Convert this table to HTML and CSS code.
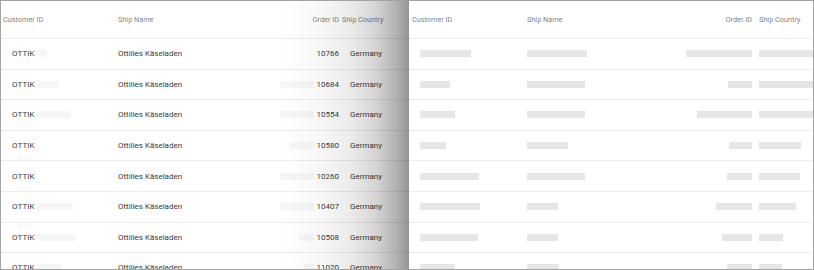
FILE: index.html
```html
<!DOCTYPE html>
<html>
<head>
<meta charset="utf-8">
<link rel="stylesheet" href="styles.css">
</head>
<body>
<div class="frame">
  <div class="panel panel-data">
    <div class="row head">
      <div class="c1 hc">Customer ID</div>
      <div class="c2 hc">Ship Name</div>
      <div class="c3 hc">Order ID</div>
      <div class="c4 hc">Ship Country</div>
    </div>
    <div class="row"><div class="c1 dc"><span class="txt">OTTIK</span><span class="ghost" style="width:10px"></span></div><div class="c2 dc">Ottilies Käseladen</div><div class="c3 dc"><span class="num">10766</span></div><div class="c4 dc">Germany</div></div>
    <div class="row"><div class="c1 dc"><span class="txt">OTTIK</span><span class="ghost" style="width:22px"></span></div><div class="c2 dc">Ottilies Käseladen</div><div class="c3 dc"><span class="ghost" style="width:38px"></span><span class="num">10684</span></div><div class="c4 dc">Germany</div></div>
    <div class="row"><div class="c1 dc"><span class="txt">OTTIK</span><span class="ghost" style="width:34px"></span></div><div class="c2 dc">Ottilies Käseladen</div><div class="c3 dc"><span class="ghost" style="width:36px"></span><span class="num">10554</span></div><div class="c4 dc">Germany</div></div>
    <div class="row"><div class="c1 dc"><span class="txt">OTTIK</span></div><div class="c2 dc">Ottilies Käseladen</div><div class="c3 dc"><span class="ghost" style="width:24px"></span><span class="num">10580</span></div><div class="c4 dc">Germany</div></div>
    <div class="row"><div class="c1 dc"><span class="txt">OTTIK</span></div><div class="c2 dc">Ottilies Käseladen</div><div class="c3 dc"><span class="ghost" style="width:34px"></span><span class="num">10260</span></div><div class="c4 dc">Germany</div></div>
    <div class="row"><div class="c1 dc"><span class="txt">OTTIK</span><span class="ghost" style="width:36px"></span></div><div class="c2 dc">Ottilies Käseladen</div><div class="c3 dc"><span class="ghost" style="width:38px"></span><span class="num">10407</span></div><div class="c4 dc">Germany</div></div>
    <div class="row"><div class="c1 dc"><span class="txt">OTTIK</span><span class="ghost" style="width:39px"></span></div><div class="c2 dc">Ottilies Käseladen</div><div class="c3 dc"><span class="ghost" style="width:15px"></span><span class="num">10508</span></div><div class="c4 dc">Germany</div></div>
    <div class="row"><div class="c1 dc"><span class="txt">OTTIK</span><span class="ghost" style="width:25px"></span></div><div class="c2 dc">Ottilies Käseladen</div><div class="c3 dc"><span class="ghost" style="width:10px"></span><span class="num">11020</span></div><div class="c4 dc">Germany</div></div>
    <div class="shade"></div>
  </div>
  <div class="panel panel-skel">
    <div class="row head">
      <div class="k1 hc">Customer ID</div>
      <div class="k2 hc">Ship Name</div>
      <div class="k3 hc">Order ID</div>
      <div class="k4 hc">Ship Country</div>
    </div>
    <div class="row"><div class="k1 sc"><span class="bar" style="width:51px"></span></div><div class="k2 sc"><span class="bar" style="width:60px"></span></div><div class="k3 sc"><span class="bar" style="width:66px"></span></div><div class="k4 sc"><span class="bar" style="width:60px"></span></div></div>
    <div class="row"><div class="k1 sc"><span class="bar" style="width:30px"></span></div><div class="k2 sc"><span class="bar" style="width:58px"></span></div><div class="k3 sc"><span class="bar" style="width:24px"></span></div><div class="k4 sc"><span class="bar" style="width:60px"></span></div></div>
    <div class="row"><div class="k1 sc"><span class="bar" style="width:35px"></span></div><div class="k2 sc"><span class="bar" style="width:58px"></span></div><div class="k3 sc"><span class="bar" style="width:55px"></span></div><div class="k4 sc"><span class="bar" style="width:60px"></span></div></div>
    <div class="row"><div class="k1 sc"><span class="bar" style="width:26px"></span></div><div class="k2 sc"><span class="bar" style="width:41px"></span></div><div class="k3 sc"><span class="bar" style="width:23px"></span></div><div class="k4 sc"><span class="bar" style="width:42px"></span></div></div>
    <div class="row"><div class="k1 sc"><span class="bar" style="width:59px"></span></div><div class="k2 sc"><span class="bar" style="width:58px"></span></div><div class="k3 sc"><span class="bar" style="width:25px"></span></div><div class="k4 sc"><span class="bar" style="width:41px"></span></div></div>
    <div class="row"><div class="k1 sc"><span class="bar" style="width:60px"></span></div><div class="k2 sc"><span class="bar" style="width:31px"></span></div><div class="k3 sc"><span class="bar" style="width:36px"></span></div><div class="k4 sc"><span class="bar" style="width:37px"></span></div></div>
    <div class="row"><div class="k1 sc"><span class="bar" style="width:58px"></span></div><div class="k2 sc"><span class="bar" style="width:31px"></span></div><div class="k3 sc"><span class="bar" style="width:30px"></span></div><div class="k4 sc"><span class="bar" style="width:24px"></span></div></div>
    <div class="row"><div class="k1 sc"><span class="bar" style="width:35px"></span></div><div class="k2 sc"><span class="bar" style="width:32px"></span></div><div class="k3 sc"><span class="bar" style="width:25px"></span></div><div class="k4 sc"><span class="bar" style="width:23px"></span></div></div>
  </div>
</div>
</body>
</html>
```

FILE: styles.css
```css
html, body {
  margin: 0;
  padding: 0;
  background: #ffffff;
}
body {
  font-family: Roboto, "Liberation Sans", sans-serif;
}
.frame {
  box-sizing: border-box;
  width: 814px;
  height: 270px;
  border: 1px solid #a3a3a3;
  display: flex;
  overflow: hidden;
}
.panel {
  position: relative;
  overflow: hidden;
}
.panel-data {
  width: 408px;
  flex: none;
}
.panel-skel {
  flex: 1;
}
.row {
  display: grid;
  height: 29.6px;
  border-bottom: 1px solid #ececec;
  align-items: center;
}
.row.head {
  height: 37px;
}
.panel-data .row {
  grid-template-columns: 115px 164px 60px 1fr;
}
.panel-skel .row {
  grid-template-columns: 116px 135px 93px 1fr;
}
.hc {
  font-size: 7.3px;
  color: #858585;
  white-space: nowrap;
}
.dc {
  font-size: 8px;
  color: #3a3a3a;
  white-space: nowrap;
  display: flex;
  align-items: center;
}
.c1.hc { padding-left: 2px; }
.c1.dc { padding-left: 11px; gap: 2px; }
.c2 { padding-left: 2px; }
.c3 { text-align: right; padding-right: 1px; }
.c3.dc { justify-content: flex-end; gap: 3px; }
.c4.hc { padding-left: 2px; }
.c4.dc { padding-left: 10px; }
.txt { letter-spacing: 0.1px; }
.ghost {
  display: inline-block;
  height: 7px;
  background: #f6f6f6;
}
.k1.hc { padding-left: 3px; }
.k1.sc { padding-left: 11px; }
.k2 { padding-left: 2px; }
.k3 { text-align: right; padding-right: 1px; }
.k3.sc { display: flex; justify-content: flex-end; }
.k4 { padding-left: 6px; }
.sc {
  display: flex;
  align-items: center;
}
.bar {
  display: inline-block;
  height: 7px;
  background: #e6e6e6;
}
.shade {
  position: absolute;
  top: 0;
  bottom: 0;
  left: 0;
  right: 0;
  pointer-events: none;
  background: linear-gradient(to right,
    rgba(0,0,0,0) 280px,
    rgba(0,0,0,0.03) 320px,
    rgba(0,0,0,0.08) 350px,
    rgba(0,0,0,0.17) 375px,
    rgba(0,0,0,0.30) 395px,
    rgba(0,0,0,0.42) 408px);
}
```
